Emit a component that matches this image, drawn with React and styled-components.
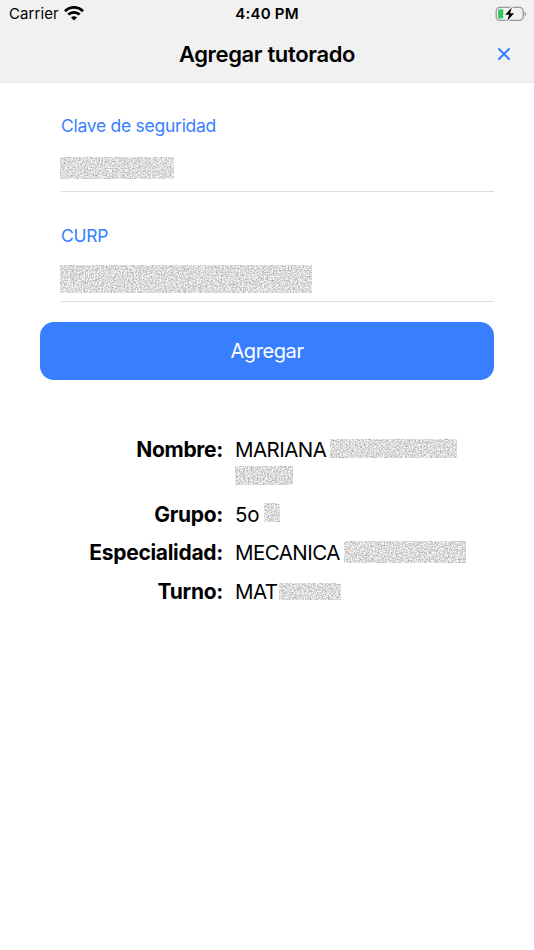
import React from 'react';
import styled, { createGlobalStyle } from 'styled-components';

const COLOR = {
  primary: '#387fff',
  bar: '#f1f1f1',
  barLine: '#e6e6e6',
  line: '#dddddd',
  black: '#000000',
  white: '#ffffff',
};

const GlobalStyle = createGlobalStyle`
  * {
    box-sizing: border-box;
  }

  body {
    margin: 0;
    background: ${COLOR.white};
    color: ${COLOR.black};
    font-family: Inter, Roboto, sans-serif;
  }
`;

const Screen = styled.div`
  width: 534px;
  height: 950px;
  overflow: hidden;
  background: ${COLOR.white};
`;

const TopBar = styled.header`
  height: 83px;
  background: ${COLOR.bar};
  border-bottom: 1px solid ${COLOR.barLine};
`;

const StatusBar = styled.div`
  display: grid;
  grid-template-columns: 1fr auto 1fr;
  align-items: center;
  height: 27px;
  padding: 0 7px 0 9px;
`;

const Carrier = styled.div`
  display: flex;
  align-items: center;
  gap: 5px;
  font-size: 15px;
  line-height: 19px;
  letter-spacing: 0.1px;
`;

const Clock = styled.div`
  margin-left: -2px;
  font-size: 15px;
  font-weight: 600;
  line-height: 19px;
  letter-spacing: 0.2px;
`;

const BatteryIcon = styled.svg`
  display: block;
  justify-self: end;
`;

const NavBar = styled.div`
  display: grid;
  grid-template-columns: 60px 1fr 60px;
  align-items: center;
  height: 54px;
`;

const Title = styled.h1`
  grid-column: 2;
  margin: 0;
  font-size: 22px;
  font-weight: 600;
  line-height: 28px;
  letter-spacing: -0.35px;
  text-align: center;
`;

const CloseButton = styled.button`
  display: flex;
  justify-content: center;
  padding: 0;
  border: 0;
  background: none;
  color: ${COLOR.primary};
`;

const Form = styled.form`
  padding: 29px 40px 0;
`;

const Field = styled.div`
  height: 110px;
  margin-left: 21px;
`;

const Label = styled.label`
  display: block;
  height: 28px;
  font-size: 17.5px;
  line-height: 28px;
  letter-spacing: -0.27px;
  color: ${COLOR.primary};
`;

const FieldValue = styled.div`
  display: flex;
  align-items: center;
  height: 52px;
  margin-bottom: 30px;
  padding-top: ${({ $top }) => $top}px;
  border-bottom: 1px solid ${COLOR.line};
`;

const SubmitButton = styled.button`
  display: block;
  width: 100%;
  height: 57.5px;
  margin-top: -10px;
  padding: 1px 0 0;
  border: 0;
  border-radius: 14px;
  background: ${COLOR.primary};
  color: ${COLOR.white};
  font-family: inherit;
  font-size: 20px;
  letter-spacing: -0.4px;
`;

const Details = styled.dl`
  display: grid;
  grid-template-columns: 223px 1fr;
  column-gap: 12px;
  row-gap: 12.7px;
  margin: 57.5px 0 0;
  font-size: 21px;
  line-height: 26px;
`;

const Term = styled.dt`
  font-weight: 700;
  letter-spacing: -0.3px;
  text-align: right;
`;

const Description = styled.dd`
  margin: 0;
`;

const Line = styled.div`
  display: flex;
  align-items: center;
  height: 26px;
  font-size: 20.5px;
  letter-spacing: ${({ $spacing }) => $spacing || '-0.55px'};
`;

const GrainBox = styled.svg`
  display: block;
  flex: none;
  margin-left: ${({ $left }) => $left || 0}px;
  margin-top: ${({ $top }) => $top || 0}px;
`;

const Grain = ({ id, width, height, left, top }) => (
  <GrainBox width={width} height={height} $left={left} $top={top} aria-hidden="true">
    <filter id={id} x="0" y="0" width="100%" height="100%" colorInterpolationFilters="sRGB">
      <feTurbulence type="fractalNoise" baseFrequency="0.67 0.71" numOctaves="4" seed={width} />
      <feColorMatrix values="0.45 0.45 0 0 0.41  0.45 0.45 0 0 0.41  0.45 0.45 0 0 0.41  0 0 0 0 1" />
    </filter>
    <rect width={width} height={height} filter={`url(#${id})`} />
  </GrainBox>
);

const Wifi = () => (
  <svg width="20" height="15" viewBox="0 0 20 15" fill="none" stroke="#000" strokeWidth="2.8">
    <path d="M1 5.2C6 .1 14 .1 19 5.2" />
    <path d="M4.3 8.6C7.5 5.5 12.5 5.5 15.7 8.6" />
    <path d="M7 11.5C8.7 9.8 11.3 9.8 13 11.5L10 14.5Z" fill="#000" stroke="none" />
  </svg>
);

const Battery = () => (
  <BatteryIcon width="32" height="16" viewBox="0 0 32 16">
    <rect x="1.2" y="1.4" width="27" height="13" rx="3.8" fill="none" stroke="#999" strokeWidth="1.3" />
    <path d="M29.6 5.5v4.8c2-.7 2-4.1 0-4.8Z" fill="#999" />
    <rect x="3.1" y="3.2" width="5.2" height="9.4" rx="1.4" fill="#34c759" />
    <path
      d="M16.8 1.4 10.2 8.8h3.9l-1.9 6.2 6.9-7.8h-4Z"
      fill="#000"
      stroke={COLOR.bar}
      strokeWidth="2.4"
      paintOrder="stroke"
    />
  </BatteryIcon>
);

const App = () => (
  <Screen>
    <GlobalStyle />
    <TopBar>
      <StatusBar>
        <Carrier>
          Carrier
          <Wifi />
        </Carrier>
        <Clock>4:40 PM</Clock>
        <Battery />
      </StatusBar>
      <NavBar>
        <Title>Agregar tutorado</Title>
        <CloseButton type="button" aria-label="Cerrar">
          <svg width="12" height="12" viewBox="0 0 12 12" stroke="currentColor" strokeWidth="2">
            <path d="M1 1l10 10M11 1L1 11" strokeLinecap="round" />
          </svg>
        </CloseButton>
      </NavBar>
    </TopBar>

    <Form>
      <Field>
        <Label>Clave de seguridad</Label>
        <FieldValue $top={4}>
          <Grain id="grain-clave" width={114} height={22} left={-1} />
        </FieldValue>
      </Field>
      <Field>
        <Label>CURP</Label>
        <FieldValue $top={7}>
          <Grain id="grain-curp" width={252} height={28} left={-1} />
        </FieldValue>
      </Field>
      <SubmitButton type="button">Agregar</SubmitButton>
    </Form>

    <Details>
      <Term>Nombre:</Term>
      <Description>
        <Line>
          MARIANA
          <Grain id="grain-nombre" width={127} height={19} left={4} top={-3} />
        </Line>
        <Line>
          <Grain id="grain-nombre-2" width={58} height={19} top={-2} />
        </Line>
      </Description>
      <Term>Grupo:</Term>
      <Description>
        <Line $spacing="-0.1px">
          5o
          <Grain id="grain-grupo" width={16} height={19} left={4} top={-4} />
        </Line>
      </Description>
      <Term>Especialidad:</Term>
      <Description>
        <Line>
          MECANICA
          <Grain id="grain-especialidad" width={122} height={22} left={4} top={-2} />
        </Line>
      </Description>
      <Term>Turno:</Term>
      <Description>
        <Line>
          MAT
          <Grain id="grain-turno" width={62} height={17} left={1} top={-2} />
        </Line>
      </Description>
    </Details>
  </Screen>
);

export default App;
